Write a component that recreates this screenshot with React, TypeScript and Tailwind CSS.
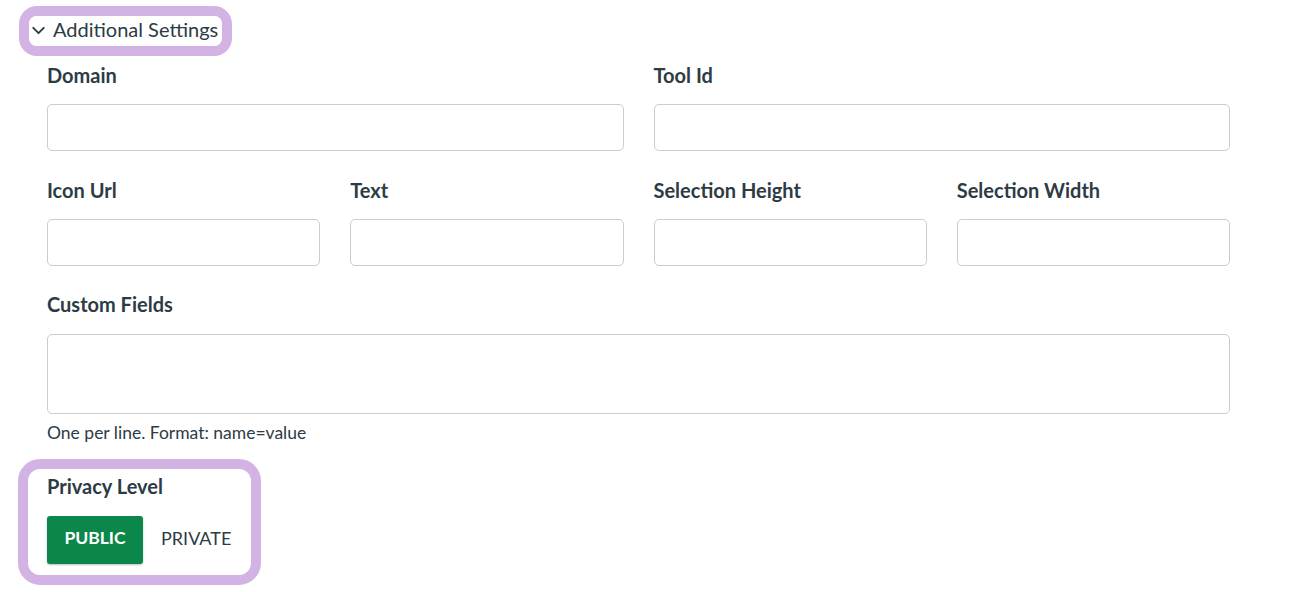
import { ChevronDown } from "lucide-react";

const font = { fontFamily: "Lato, 'Open Sans', sans-serif" };

function Field({ label, className = "" }: { label: string; className?: string }) {
  return (
    <div className={className}>
      <label className="block text-[20px] font-bold leading-[26px] text-[#2d3b45] mb-[16px]">{label}</label>
      <input className="block w-full h-[47px] rounded-[5px] border border-[#c7cdd1] bg-white outline-none" />
    </div>
  );
}

export default function App() {
  return (
    <div className="w-[1294px] h-[592px] bg-white text-[#2d3b45] overflow-hidden" style={font}>
      <div className="pt-[6px] pl-[19px]">
        <div className="inline-flex rounded-[18px] border-[10px] border-[#d3b3e4]">
          <button className="flex items-center h-[30px] pb-[5px] pl-0 pr-[4px] bg-white rounded-[8px] text-[20px] leading-[24px] text-[#2d3b45]">
            <ChevronDown size={21} strokeWidth={2.2} className="-ml-[1px] mr-[4px] mt-[3px]" />
            Additional Settings
          </button>
        </div>
      </div>

      <div className="pl-[47px] w-[1230px]">
        <div className="grid grid-cols-2 gap-x-[30px] mt-[6px]">
          <Field label="Domain" />
          <Field label="Tool Id" />
        </div>
        <div className="grid grid-cols-4 gap-x-[30px] mt-[26px]">
          <Field label="Icon Url" />
          <Field label="Text" />
          <Field label="Selection Height" />
          <Field label="Selection Width" />
        </div>
        <div className="mt-[25px]">
          <label className="block text-[20px] font-bold leading-[26px] mb-[17px]">Custom Fields</label>
          <textarea className="block w-full h-[80px] rounded-[5px] border border-[#c7cdd1] resize-none outline-none" />
          <p className="text-[17.5px] leading-[24px] mt-[7px]">One per line. Format: name=value</p>
        </div>
      </div>

      <div className="pl-[18px] mt-[14px]">
        <div className="inline-block rounded-[22px] border-[10px] border-[#d3b3e4] pt-[4px] pb-[11px] pl-[19px] pr-[20px]">
          <div className="text-[20px] font-bold leading-[26px] mb-[17px]">Privacy Level</div>
          <div className="flex items-center">
            <button className="h-[48px] w-[96px] pb-[3px] rounded-[3px] bg-[#0b874b] text-white text-[17.5px] font-bold shadow-[0_1px_2px_rgba(0,0,0,0.25)]">PUBLIC</button>
            <button className="ml-[18px] h-[48px] pb-[3px] text-[18px] text-[#2d3b45]">PRIVATE</button>
          </div>
        </div>
      </div>
    </div>
  );
}
